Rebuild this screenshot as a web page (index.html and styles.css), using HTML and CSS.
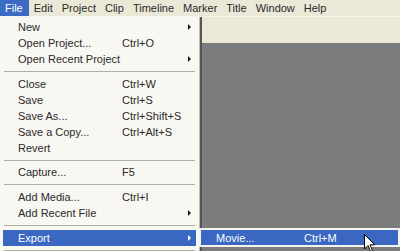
FILE: index.html
```html
<!DOCTYPE html>
<html>
<head>
<meta charset="utf-8">
<link rel="stylesheet" href="styles.css">
</head>
<body>
<div class="app">
  <div class="menubar">
    <span class="mb-item active">File</span>
    <span class="mb-item">Edit</span>
    <span class="mb-item">Project</span>
    <span class="mb-item">Clip</span>
    <span class="mb-item">Timeline</span>
    <span class="mb-item">Marker</span>
    <span class="mb-item">Title</span>
    <span class="mb-item">Window</span>
    <span class="mb-item">Help</span>
  </div>
  <div class="toolbar"></div>
  <div class="workspace"></div>

  <div class="menu">
    <div class="row"><span class="label">New</span><span class="key"></span><span class="arrow"></span></div>
    <div class="row"><span class="label">Open Project...</span><span class="key">Ctrl+O</span></div>
    <div class="row"><span class="label">Open Recent Project</span><span class="key"></span><span class="arrow"></span></div>
    <div class="sep wide"></div>
    <div class="row"><span class="label">Close</span><span class="key">Ctrl+W</span></div>
    <div class="row"><span class="label">Save</span><span class="key">Ctrl+S</span></div>
    <div class="row"><span class="label">Save As...</span><span class="key">Ctrl+Shift+S</span></div>
    <div class="row"><span class="label">Save a Copy...</span><span class="key">Ctrl+Alt+S</span></div>
    <div class="row"><span class="label">Revert</span></div>
    <div class="sep"></div>
    <div class="row"><span class="label">Capture...</span><span class="key">F5</span></div>
    <div class="sep wide"></div>
    <div class="row"><span class="label">Add Media...</span><span class="key">Ctrl+I</span></div>
    <div class="row"><span class="label">Add Recent File</span><span class="key"></span><span class="arrow"></span></div>
    <div class="sep wide"></div>
    <div class="row hl"><span class="label">Export</span><span class="key"></span><span class="arrow white"></span></div>
    <div class="sep"></div>
  </div>

  <div class="submenu">
    <div class="row hl"><span class="label">Movie...</span><span class="key">Ctrl+M</span></div>
  </div>

  <svg class="cursor" width="12" height="19" viewBox="0 0 12 19">
    <path d="M0.5 0.5 L0.5 15 L4 11.5 L6.5 17.5 L8.5 16.6 L6 10.8 L10.8 10.8 Z" fill="#ffffff" stroke="#000000" stroke-width="1" stroke-linejoin="miter"/>
  </svg>
</div>
</body>
</html>
```
FILE: styles.css
```css
* { box-sizing: border-box; }
html, body {
  margin: 0;
  padding: 0;
}
body {
  width: 400px;
  height: 251px;
  overflow: hidden;
  font-family: "Liberation Sans", "DejaVu Sans", sans-serif;
  font-size: 11px;
  color: #2a2a2a;
}
.app {
  position: relative;
  width: 400px;
  height: 251px;
  display: flex;
  flex-direction: column;
  background: #7c7c7c;
}
.menubar {
  height: 17px;
  background: #ebe8d7;
  display: flex;
  align-items: stretch;
  font-size: 11px;
  border-bottom: 1px solid #f6f4ea;
  white-space: nowrap;
}
.mb-item {
  padding: 0 4px 0 5px;
  display: flex;
  align-items: center;
}
.mb-item.active {
  background: #3b6bc4;
  color: #ffffff;
  padding: 0 6px 0 5px;
}
.toolbar {
  height: 26px;
  background: #ebe8d7;
}
.workspace {
  flex: 1;
  background: #7c7c7c;
}
.menu {
  position: absolute;
  left: 0;
  top: 17px;
  width: 200px;
  padding: 2px 3px 0 3px;
  background: #f8f7f2;
  border-right: 1px solid #bdbab0;
  box-shadow: 2px 0 0 #555555;
  white-space: nowrap;
}
.row {
  height: 16px;
  display: flex;
  align-items: center;
  padding-left: 15px;
  position: relative;
}
.label { width: 104px; white-space: nowrap; }
.key { flex: 1; white-space: nowrap; }
.arrow {
  position: absolute;
  right: 5px;
  top: 5px;
  width: 0;
  height: 0;
  border-top: 3px solid transparent;
  border-bottom: 3px solid transparent;
  border-left: 3px solid #1a1a1a;
}
.arrow.white { border-left-color: #ffffff; }
.sep {
  height: 1px;
  background: #b0ada2;
  margin: 4px 1px 3px 1px;
}
.sep.wide { margin: 4px 1px 4px 1px; }
.row.hl {
  background: #3a67c1;
  color: #ffffff;
}
.submenu {
  position: absolute;
  left: 199px;
  top: 228px;
  width: 201px;
  padding: 2px 2px;
  background: #f4f3ee;
}
.submenu .row { padding-left: 15px; height: 15px; }
.submenu .label { width: 88px; }
.cursor {
  position: absolute;
  left: 364px;
  top: 234px;
}
```
